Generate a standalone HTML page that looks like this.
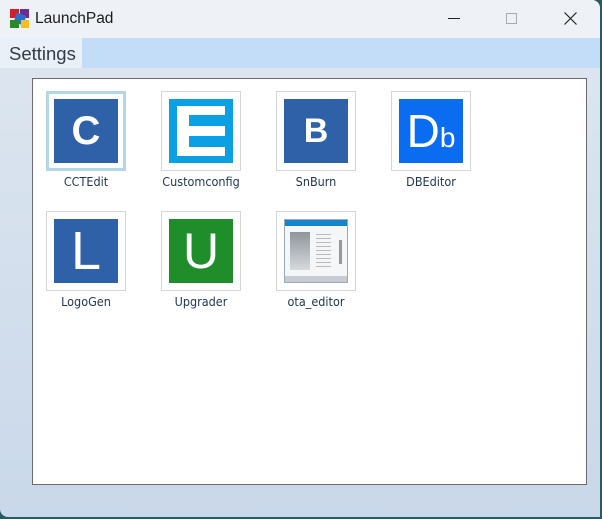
<!DOCTYPE html>
<html><head><style>
*{margin:0;padding:0;box-sizing:border-box}
body{width:602px;height:519px;overflow:hidden;background:#2b5a5e;font-family:"Liberation Sans","DejaVu Sans",sans-serif;position:relative}
.win{position:absolute;left:0;top:0;width:600px;height:517px;border-radius:0 8px 0 8px;overflow:hidden;background:linear-gradient(#dfe7f0,#c9d8ea)}
.title{position:absolute;left:0;top:0;width:600px;height:38px;background:#eef2f7}
.title .t{position:absolute;left:35px;top:10px;font-size:15.5px;color:#1a1a1a}
.menu{position:absolute;left:0;top:38px;width:600px;height:30px;background:#c3dcf8}
.menu .s{position:absolute;left:0;top:0;width:82px;height:30px;background:#e9f0f7;font-size:18.5px;color:#333a48;padding:5px 0 0 9px}
.panel{position:absolute;left:32px;top:78px;width:555px;height:407px;background:#fff;border:1px solid #6b6b6b}
.tile{position:absolute;width:80px;height:80px;border:1px solid #d6d6d6;background:#fff}
.tile .ic{position:absolute;left:7px;top:7px;width:64px;height:64px;color:#fff;text-align:center;font-weight:bold}
.lbl{position:absolute;width:110px;text-align:center;font-size:12.5px;color:#1f3552;font-family:"DejaVu Sans Condensed","DejaVu Sans",sans-serif}
</style></head><body>
<div class="win">
<div class="title">
<svg style="position:absolute;left:10px;top:9px" width="20" height="20" viewBox="0 0 20 20"><rect x="0" y="0" width="9" height="9" fill="#d0202a"/><rect x="10" y="0" width="9" height="9" fill="#6a2d90"/><rect x="5" y="5" width="10" height="10" fill="#2a6fd0" transform="rotate(20 10 10)"/><rect x="0" y="11" width="9" height="8" fill="#2a8a2a"/><rect x="11" y="11" width="8" height="8" fill="#f0c020"/></svg>
<div class="t">LaunchPad</div>
<div style="position:absolute;left:448px;top:18px;width:12px;height:1px;background:#222"></div>
<div style="position:absolute;left:506px;top:13px;width:11px;height:11px;border:1px solid #aaa"></div>
<svg style="position:absolute;left:564px;top:12px" width="13" height="13"><path d="M0.5 0.5L12.5 12.5M12.5 0.5L0.5 12.5" stroke="#222" stroke-width="1.2"/></svg>
</div>
<div class="menu"><div class="s">Settings</div></div>
<div class="panel"></div>
</div>
<div class="tile" style="left:46px;top:91px;border:3px solid #b3d7e6"><div class="ic" style="left:5px;top:5px;background:#2f61a8;font-size:40px;line-height:64px">C</div></div>
<div class="lbl" style="left:31px;top:174px">CCTEdit</div>
<div class="tile" style="left:161px;top:91px"><div class="ic" style="background:#0ba0e4">
<div style="position:absolute;left:8px;top:7px;width:48px;height:50px;background:#fff"></div>
<div style="position:absolute;left:20px;top:16px;width:36px;height:11px;background:#0ba0e4"></div>
<div style="position:absolute;left:20px;top:37px;width:36px;height:11px;background:#0ba0e4"></div></div></div>
<div class="lbl" style="left:146px;top:174px">Customconfig</div>
<div class="tile" style="left:276px;top:91px"><div class="ic" style="background:#2f61a8;font-size:34px;line-height:64px">B</div></div>
<div class="lbl" style="left:261px;top:174px">SnBurn</div>
<div class="tile" style="left:391px;top:91px"><div class="ic" style="background:#0a6cf0;font-weight:normal;line-height:64px"><span style="font-size:46px">D</span><span style="font-size:28px">b</span></div></div>
<div class="lbl" style="left:376px;top:174px">DBEditor</div>
<div class="tile" style="left:46px;top:211px"><div class="ic" style="background:#2f61a8;font-weight:normal;font-size:54px;line-height:64px">L</div></div>
<div class="lbl" style="left:31px;top:294px">LogoGen</div>
<div class="tile" style="left:161px;top:211px"><div class="ic" style="background:#1f8e2a;font-weight:normal;font-size:50px;line-height:64px">U</div></div>
<div class="lbl" style="left:146px;top:294px">Upgrader</div>
<div class="tile" style="left:276px;top:211px"><div class="ic" style="background:#f4f6f8;border:1px solid #9ab">
<div style="position:absolute;left:0;top:0;width:62px;height:6px;background:#1a84c8"></div>
<div style="position:absolute;left:5px;top:12px;width:20px;height:38px;background:linear-gradient(#8f959b,#d6dadd)"></div>
<div style="position:absolute;left:31px;top:14px;width:15px;height:34px;background:repeating-linear-gradient(#bbb 0 1px,transparent 1px 4px)"></div>
<div style="position:absolute;left:54px;top:20px;width:3px;height:24px;background:#999"></div>
<div style="position:absolute;left:0;top:56px;width:62px;height:6px;background:#c8ccd2"></div></div></div>
<div class="lbl" style="left:261px;top:294px">ota_editor</div>
</body></html>
